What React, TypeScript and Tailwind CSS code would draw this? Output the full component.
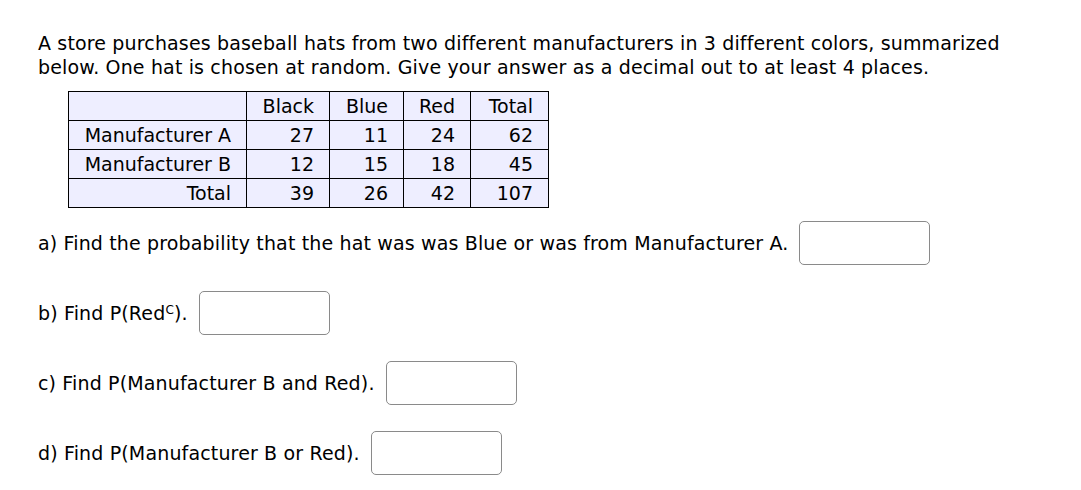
const rows = [
  { label: "Manufacturer A", values: [27, 11, 24, 62] },
  { label: "Manufacturer B", values: [12, 15, 18, 45] },
  { label: "Total", values: [39, 26, 42, 107] },
];

const colWidths = ["w-[178px]", "w-[83px]", "w-[74px]", "w-[67px]", "w-[78px]"];

function AnswerBox() {
  return (
    <input
      type="text"
      className="h-[44px] w-[131px] rounded-[5px] border border-[#8a8a8a] bg-white align-middle"
    />
  );
}

export default function App() {
  return (
    <div className="min-h-[490px] w-[1081px] bg-white pl-[38px] pt-[31px] font-['DejaVu_Sans',sans-serif] text-[19px] tracking-[0.15px] text-black">
      <p className="w-[980px] leading-[24px]">
        A store purchases baseball hats from two different manufacturers in 3 different colors, summarized
        below. One hat is chosen at random. Give your answer as a decimal out to at least 4 places.
      </p>

      <table className="ml-[30px] mt-[12px] border-collapse bg-[#eeeeff] leading-[28px] tracking-normal">
        <thead>
          <tr>
            {["", "Black", "Blue", "Red", "Total"].map((h, i) => (
              <th
                key={i}
                className={`${colWidths[i]} border border-black pr-[15px] text-right font-normal`}
              >
                {h}
              </th>
            ))}
          </tr>
        </thead>
        <tbody>
          {rows.map((r) => (
            <tr key={r.label}>
              <td className="border border-black pr-[15px] text-right">{r.label}</td>
              {r.values.map((v, i) => (
                <td key={i} className="border border-black pr-[15px] text-right">
                  {v}
                </td>
              ))}
            </tr>
          ))}
        </tbody>
      </table>

      <div className="mt-[13px] flex items-center gap-[11px]">
        <span>a) Find the probability that the hat was was Blue or was from Manufacturer A.</span>
        <AnswerBox />
      </div>

      <div className="mt-[26px] flex items-center gap-[11px]">
        <span>
          b) Find P(Red<sup className="text-[12px]">C</sup>).
        </span>
        <AnswerBox />
      </div>

      <div className="mt-[26px] flex items-center gap-[11px]">
        <span>c) Find P(Manufacturer B and Red).</span>
        <AnswerBox />
      </div>

      <div className="mt-[26px] flex items-center gap-[11px]">
        <span>d) Find P(Manufacturer B or Red).</span>
        <AnswerBox />
      </div>
    </div>
  );
}
